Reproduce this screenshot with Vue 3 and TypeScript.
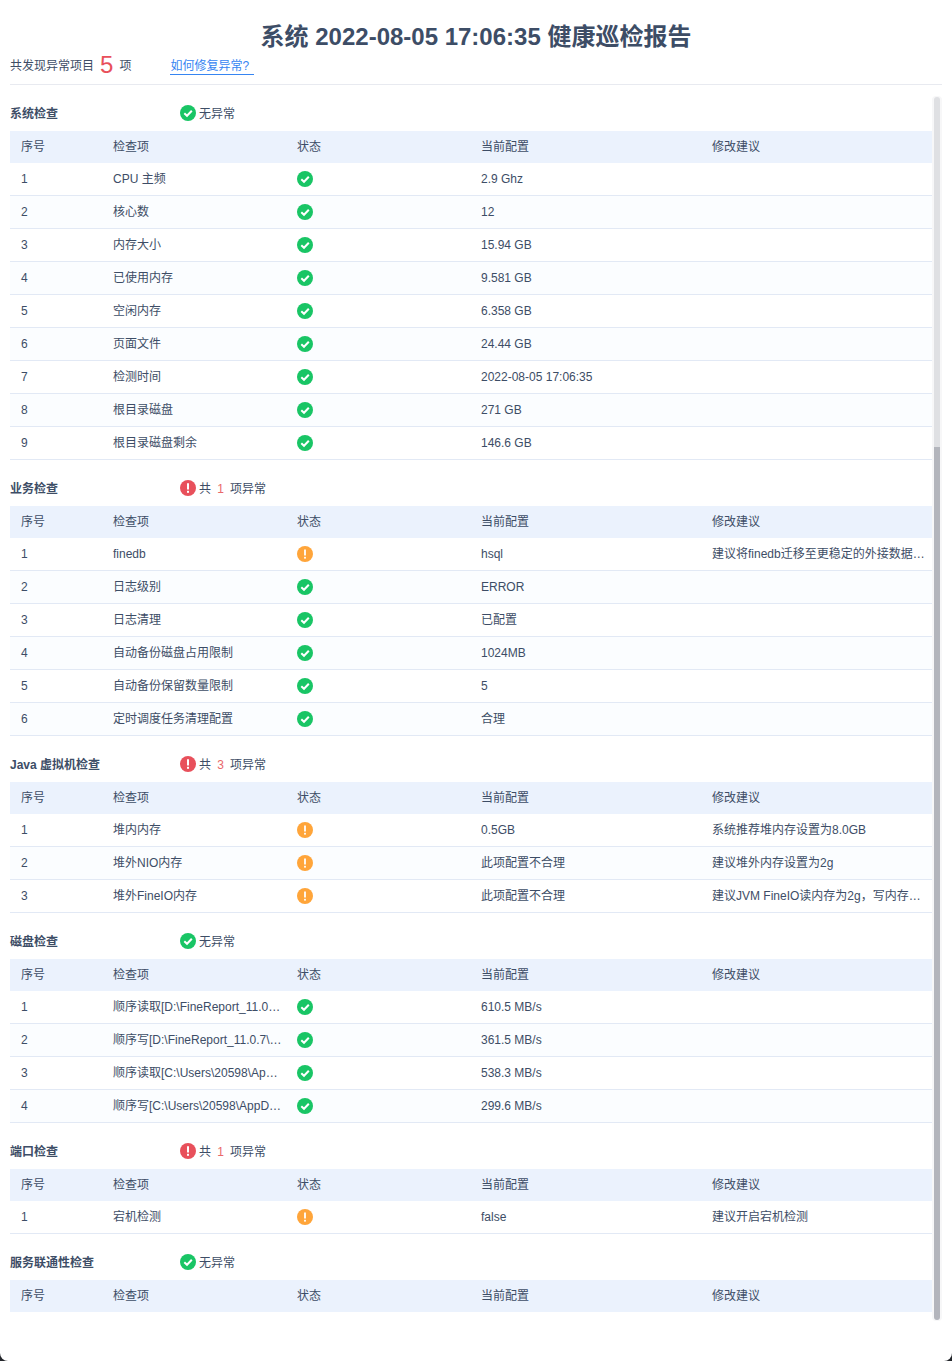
<script setup lang="ts">
type Row = { name: string; ok: boolean; config: string; advice?: string }
type Section = { title: string; count: number; rows: Row[] }

const columns = ['序号', '检查项', '状态', '当前配置', '修改建议']

const sections: Section[] = [
  {
    title: '系统检查',
    count: 0,
    rows: [
      { name: 'CPU 主频', ok: true, config: '2.9 Ghz' },
      { name: '核心数', ok: true, config: '12' },
      { name: '内存大小', ok: true, config: '15.94 GB' },
      { name: '已使用内存', ok: true, config: '9.581 GB' },
      { name: '空闲内存', ok: true, config: '6.358 GB' },
      { name: '页面文件', ok: true, config: '24.44 GB' },
      { name: '检测时间', ok: true, config: '2022-08-05 17:06:35' },
      { name: '根目录磁盘', ok: true, config: '271 GB' },
      { name: '根目录磁盘剩余', ok: true, config: '146.6 GB' },
    ],
  },
  {
    title: '业务检查',
    count: 1,
    rows: [
      { name: 'finedb', ok: false, config: 'hsql', advice: '建议将finedb迁移至更稳定的外接数据库中使用' },
      { name: '日志级别', ok: true, config: 'ERROR' },
      { name: '日志清理', ok: true, config: '已配置' },
      { name: '自动备份磁盘占用限制', ok: true, config: '1024MB' },
      { name: '自动备份保留数量限制', ok: true, config: '5' },
      { name: '定时调度任务清理配置', ok: true, config: '合理' },
    ],
  },
  {
    title: 'Java 虚拟机检查',
    count: 3,
    rows: [
      { name: '堆内内存', ok: false, config: '0.5GB', advice: '系统推荐堆内存设置为8.0GB' },
      { name: '堆外NIO内存', ok: false, config: '此项配置不合理', advice: '建议堆外内存设置为2g' },
      { name: '堆外FineIO内存', ok: false, config: '此项配置不合理', advice: '建议JVM FineIO读内存为2g，写内存为4g' },
    ],
  },
  {
    title: '磁盘检查',
    count: 0,
    rows: [
      { name: '顺序读取[D:\\FineReport_11.0.7\\webapps]', ok: true, config: '610.5 MB/s' },
      { name: '顺序写[D:\\FineReport_11.0.7\\webapps]', ok: true, config: '361.5 MB/s' },
      { name: '顺序读取[C:\\Users\\20598\\AppData\\Local]', ok: true, config: '538.3 MB/s' },
      { name: '顺序写[C:\\Users\\20598\\AppData\\Local]', ok: true, config: '299.6 MB/s' },
    ],
  },
  {
    title: '端口检查',
    count: 1,
    rows: [{ name: '宕机检测', ok: false, config: 'false', advice: '建议开启宕机检测' }],
  },
  { title: '服务联通性检查', count: 0, rows: [] },
]
</script>

<template>
  <div class="page">
    <header class="head">
      <h1 class="title">系统 2022-08-05 17:06:35 健康巡检报告</h1>
      <div class="summary">
        <span class="nudge">共发现异常项目</span>
        <span class="total">5</span>
        <span class="nudge">项</span>
        <a class="fix-link">如何修复异常?</a>
      </div>
    </header>

    <main class="body">
      <section v-for="section in sections" :key="section.title" class="block">
        <div class="section-head">
          <span class="section-title nudge">{{ section.title }}</span>
          <span class="section-status">
            <svg v-if="section.count === 0" class="icon" viewBox="0 0 16 16">
              <circle cx="8" cy="8" r="8" fill="#19c565" />
              <path d="M4.3 8.2 7 10.8 11.8 5.8" fill="none" stroke="#fff" stroke-width="2" />
            </svg>
            <svg v-else class="icon" viewBox="0 0 16 16">
              <circle cx="8" cy="8" r="8" fill="#e8505b" />
              <path d="M8 3.2V9.4" fill="none" stroke="#fff" stroke-width="2" />
              <rect x="7" y="10.8" width="2" height="2" fill="#fff" />
            </svg>
            <template v-if="section.count === 0">
              <span class="status-text nudge">无异常</span>
            </template>
            <template v-else>
              <span class="status-text nudge">共</span>
              <span class="count nudge">{{ section.count }}</span>
              <span class="nudge">项异常</span>
            </template>
          </span>
        </div>
        <table class="grid">
          <colgroup>
            <col class="c1" />
            <col class="c2" />
            <col class="c2" />
            <col class="c3" />
            <col class="c3" />
          </colgroup>
          <thead>
            <tr>
              <th v-for="c in columns" :key="c">{{ c }}</th>
            </tr>
          </thead>
          <tbody>
            <tr v-for="(row, i) in section.rows" :key="row.name">
              <td>{{ i + 1 }}</td>
              <td>{{ row.name }}</td>
              <td>
                <svg v-if="row.ok" class="icon" viewBox="0 0 16 16">
                  <circle cx="8" cy="8" r="8" fill="#19c565" />
                  <path d="M4.3 8.2 7 10.8 11.8 5.8" fill="none" stroke="#fff" stroke-width="2" />
                </svg>
                <svg v-else class="icon" viewBox="0 0 16 16">
                  <circle cx="8" cy="8" r="8" fill="#ffa53a" />
                  <path d="M8 3.4V9.4" fill="none" stroke="#fff" stroke-width="1.8" />
                  <rect x="7.1" y="10.8" width="1.8" height="1.8" fill="#fff" />
                </svg>
              </td>
              <td>{{ row.config }}</td>
              <td>{{ row.advice }}</td>
            </tr>
          </tbody>
        </table>
      </section>
      <div class="scrollbar">
        <div class="thumb-top"></div>
        <div class="thumb"></div>
      </div>
    </main>
  </div>
</template>

<style>
html,
body {
  margin: 0;
  background: #23262b;
}
</style>

<style scoped>
.page {
  box-sizing: border-box;
  height: 1361px;
  overflow: hidden;
  background: #fff;
  border-radius: 0 0 8px 8px;
  color: #3d4d66;
  font-family: "Liberation Sans", "Noto Sans CJK SC", sans-serif;
  font-size: 12px;
  line-height: 16px;
}
.nudge {
  padding-top: 2px;
}
.head {
  margin: 0 10px;
  padding-top: 20px;
  border-bottom: 1px solid #e8eaf0;
}
.title {
  margin: 0;
  height: 34px;
  line-height: 34px;
  text-align: center;
  font-size: 24px;
  font-weight: 700;
}
.summary {
  display: flex;
  align-items: center;
  height: 22px;
  padding-bottom: 8px;
}
.total {
  margin: 0 6px;
  font-size: 24px;
  line-height: 22px;
  color: #e8505b;
}
.fix-link {
  box-sizing: border-box;
  width: 84px;
  margin-left: 39px;
  line-height: 15px;
  padding-top: 3px;
  border-bottom: 1px solid #3685f2;
  color: #3685f2;
}
.body {
  position: relative;
  padding: 0 20px 0 10px;
}
.block {
  padding-top: 10px;
}
.section-head {
  display: flex;
  align-items: center;
  height: 36px;
}
.section-title {
  width: 170px;
  font-weight: 700;
}
.section-status {
  display: flex;
  align-items: center;
}
.icon {
  display: block;
  width: 16px;
  height: 16px;
}
.status-text {
  margin-left: 3px;
}
.count {
  width: 19px;
  text-align: center;
  color: #e9686b;
}
.grid {
  width: 922px;
  table-layout: fixed;
  border-collapse: separate;
  border-spacing: 0;
}
.c1 {
  width: 92px;
}
.c2 {
  width: 184px;
}
.c3 {
  width: 231px;
}
th,
td {
  padding: 0 3px 0 11px;
  overflow: hidden;
  white-space: nowrap;
  text-overflow: ellipsis;
  text-align: left;
  font-weight: 400;
}
th {
  height: 32px;
  background: #ebf2fd;
}
td {
  box-sizing: border-box;
  height: 33px;
  border-bottom: 1px solid #e2e9f5;
}
tbody tr:nth-child(even) td {
  background: #fbfdff;
}
.scrollbar {
  position: absolute;
  top: 11px;
  left: 932px;
  display: flex;
  flex-direction: column;
  width: 6px;
  height: 1223px;
  padding: 1px 2px;
  border-radius: 4px;
  background: #f7f7f8;
}
.thumb-top {
  height: 350px;
  border-radius: 3px 3px 0 0;
  background: #dfe0e3;
}
.thumb {
  flex: 1;
  border-radius: 0 0 3px 3px;
  background: #b3b5bc;
}
</style>
